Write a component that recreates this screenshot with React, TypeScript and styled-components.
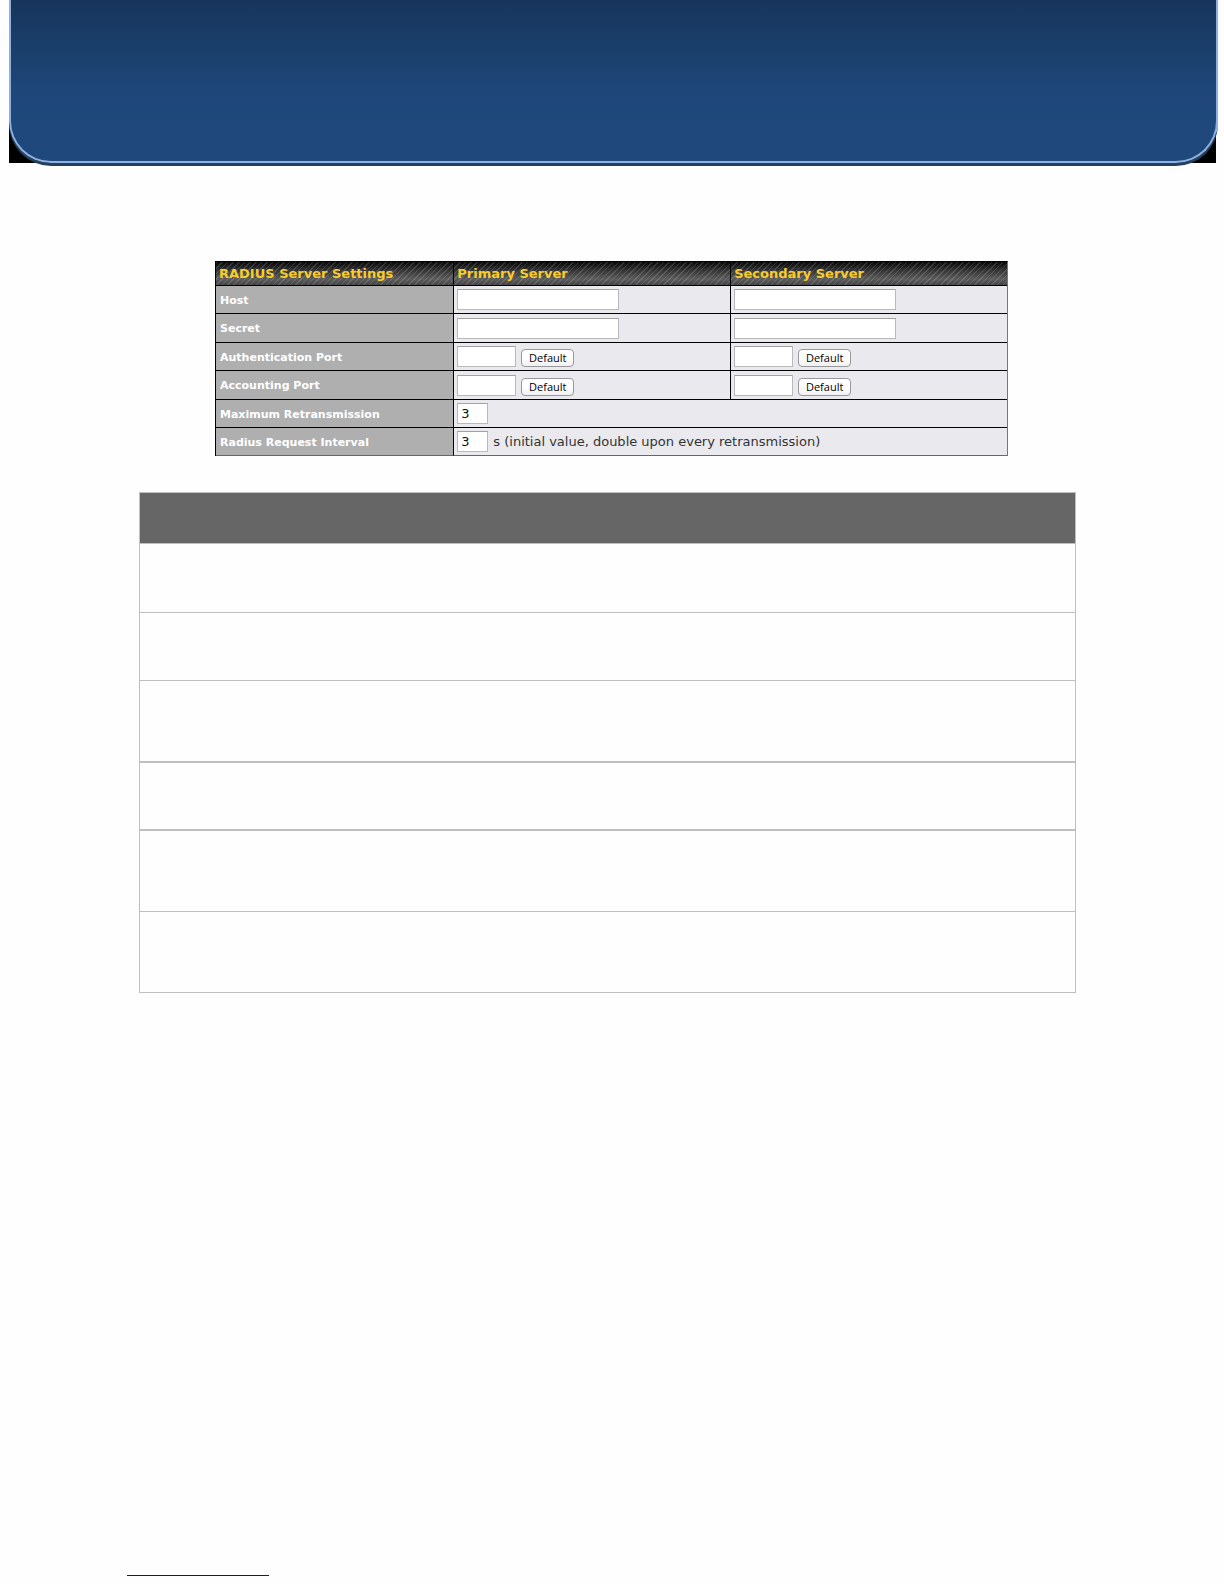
import React from "react";
import styled, { createGlobalStyle } from "styled-components";

const GlobalStyle = createGlobalStyle`
  *, *::before, *::after { box-sizing: border-box; }
  body {
    margin: 0;
    background: #fefefe;
    font-family: "DejaVu Sans", Verdana, sans-serif;
  }
`;

const Page = styled.div`
  display: flex;
  flex-direction: column;
  min-height: 100vh;
`;

const BannerBacking = styled.header`
  margin: 0 8px 0 9px;
  height: 163px;
  background: #000;
`;

const Banner = styled.div`
  height: 163px;
  margin-right: -2px;
  border: 2px solid #8fb0e0;
  border-top: 0;
  border-radius: 0 0 42px 42px;
  background: linear-gradient(#18355c 0, #1b416e 60px, #1e4679 88px, #1f497d 100%);
  box-shadow: 0 3px 0 #23415f;
`;

const Main = styled.main`
  flex: 1;
`;

const SettingsForm = styled.form`
  margin: 98px 216px 0 215px;
`;

const SettingsTable = styled.table`
  width: 100%;
  table-layout: fixed;
  border-collapse: separate;
  border-spacing: 0;
  border: 1px solid #000;
  border-right-color: #777;
  border-bottom: 0;
`;

const Column = styled.col<{ $share: number }>`
  width: ${(p) => p.$share}%;
`;

const HeadCell = styled.th`
  height: 24px;
  padding: 0 3px;
  border-bottom: 1px solid #000;
  text-align: left;
  font-size: 13px;
  line-height: 16px;
  color: #f7cd2e;
  background:
    repeating-linear-gradient(135deg, rgba(255, 255, 255, 0.14) 0 1px, transparent 1px 4px),
    linear-gradient(#080808, #383838 40%, #5c5c5c 75%, #424242);

  & + & {
    border-left: 1px solid #000;
  }
`;

const Row = styled.tr<{ $height: number }>`
  height: ${(p) => p.$height}px;

  &:last-child > * {
    border-bottom-color: #666;
  }
`;

const RowLabel = styled.th`
  padding: 2px 4px 0;
  border-bottom: 1px solid #000;
  text-align: left;
  font-size: 11px;
  line-height: 16px;
  color: #fff;
  background: #afafaf;
`;

const FieldCell = styled.td`
  padding: 0 3px;
  border-left: 1px solid #000;
  border-bottom: 1px solid #000;
  background: #eae9ee;
`;

const Field = styled.div`
  display: flex;
  align-items: flex-end;
  gap: 5px;
`;

const TextInput = styled.input<{ $width: number }>`
  width: ${(p) => p.$width}px;
  height: 21px;
  padding: 0 3px;
  border: 1px solid #b9b9bb;
  border-top-color: #a2a2a4;
  border-radius: 0;
  background: #fff;
  font: 13px "DejaVu Sans", Verdana, sans-serif;
  color: #111;
`;

const DefaultButton = styled.button`
  width: 53px;
  height: 18px;
  padding: 0;
  border: 1px solid #98989c;
  border-radius: 4px;
  background: linear-gradient(#fff, #fff 50%, #f0f0f2);
  font: 11px/14px "Open Sans", "Noto Sans", sans-serif;
  color: #000;
`;

const Hint = styled.span`
  font-size: 13px;
  line-height: 20px;
  color: #333;
`;

const DescriptionTable = styled.table`
  width: calc(100% - 287px);
  margin: 36px 148px 0 139px;
  border-collapse: separate;
  border-spacing: 0;
  border: 1px solid #bfbfbf;
  border-bottom: 0;
`;

const DescriptionHead = styled.th`
  height: 51px;
  padding: 0;
  border-bottom: 1px solid #bfbfbf;
  background: #666;
`;

const DescriptionCell = styled.td<{ $height: number; $rule: number }>`
  height: ${(p) => p.$height}px;
  padding: 0;
  border-bottom: ${(p) => p.$rule}px solid #bfbfbf;
`;

const Footer = styled.footer`
  display: flex;
  padding: 0 127px 8px;
`;

const FooterLink = styled.a`
  width: 142px;
  height: 16px;
  border-bottom: 1px solid #1010a0;
`;

const SERVERS = ["Primary Server", "Secondary Server"];

const SERVER_ROWS = [
  { label: "Host", height: 28, port: false },
  { label: "Secret", height: 29, port: false },
  { label: "Authentication Port", height: 28, port: true },
  { label: "Accounting Port", height: 29, port: true },
];

const RETRY_ROWS = [
  { label: "Maximum Retransmission", hint: "" },
  {
    label: "Radius Request Interval",
    hint: "s (initial value, double upon every retransmission)",
  },
];

const DESCRIPTION_ROWS = [
  { height: 69, rule: 1 },
  { height: 68, rule: 1 },
  { height: 82, rule: 2 },
  { height: 68, rule: 2 },
  { height: 81, rule: 1 },
  { height: 81, rule: 1 },
];

export default function App() {
  return (
    <Page>
      <GlobalStyle />
      <BannerBacking>
        <Banner />
      </BannerBacking>
      <Main>
        <SettingsForm onSubmit={(e) => e.preventDefault()}>
          <SettingsTable>
            <colgroup>
              <Column $share={30} />
              <Column $share={35} />
              <Column $share={35} />
            </colgroup>
            <thead>
              <tr>
                <HeadCell scope="col">RADIUS Server Settings</HeadCell>
                {SERVERS.map((server) => (
                  <HeadCell key={server} scope="col">
                    {server}
                  </HeadCell>
                ))}
              </tr>
            </thead>
            <tbody>
              {SERVER_ROWS.map((row) => (
                <Row key={row.label} $height={row.height}>
                  <RowLabel scope="row">{row.label}</RowLabel>
                  {SERVERS.map((server) => (
                    <FieldCell key={server}>
                      <Field>
                        <TextInput
                          type="text"
                          aria-label={`${server} ${row.label}`}
                          $width={row.port ? 59 : 162}
                        />
                        {row.port && <DefaultButton type="button">Default</DefaultButton>}
                      </Field>
                    </FieldCell>
                  ))}
                </Row>
              ))}
              {RETRY_ROWS.map((row) => (
                <Row key={row.label} $height={28}>
                  <RowLabel scope="row">
                    <label htmlFor={row.label}>{row.label}</label>
                  </RowLabel>
                  <FieldCell colSpan={2}>
                    <Field>
                      <TextInput id={row.label} type="text" defaultValue="3" $width={31} />
                      {row.hint && <Hint>{row.hint}</Hint>}
                    </Field>
                  </FieldCell>
                </Row>
              ))}
            </tbody>
          </SettingsTable>
        </SettingsForm>
        <DescriptionTable>
          <thead>
            <tr>
              <DescriptionHead scope="col" />
            </tr>
          </thead>
          <tbody>
            {DESCRIPTION_ROWS.map((row, index) => (
              <tr key={index}>
                <DescriptionCell $height={row.height} $rule={row.rule} />
              </tr>
            ))}
          </tbody>
        </DescriptionTable>
      </Main>
      <Footer>
        <FooterLink href="#" aria-label="Website" />
      </Footer>
    </Page>
  );
}
